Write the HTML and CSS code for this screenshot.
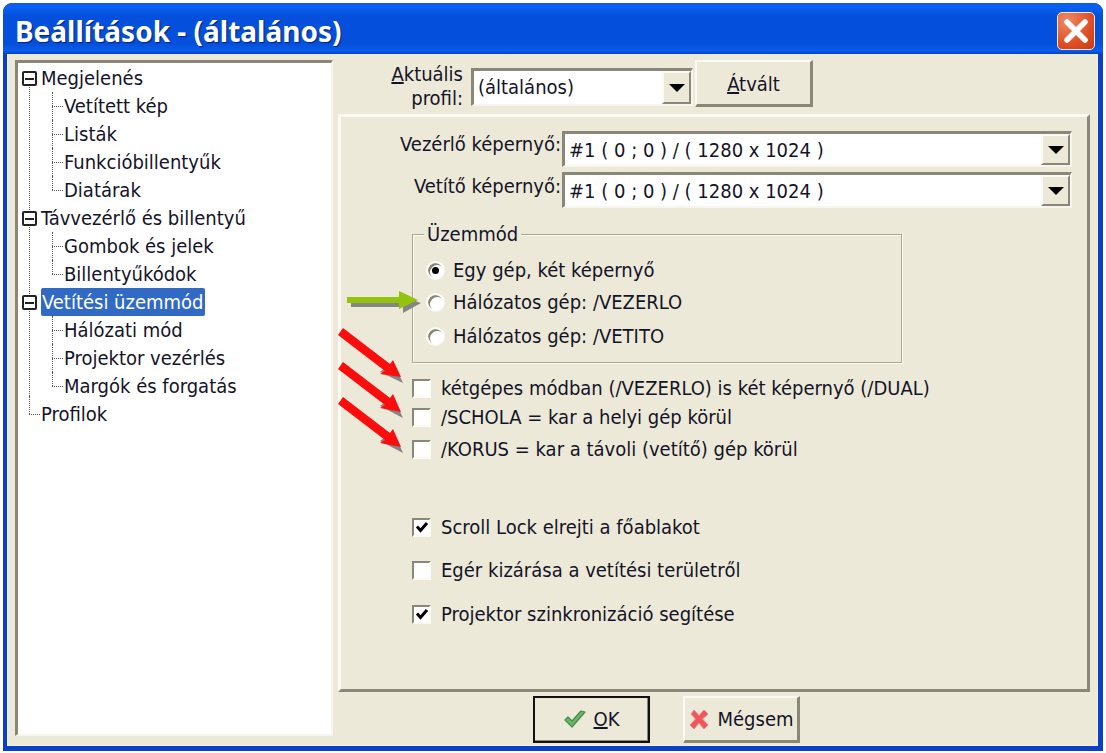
FILE: index.html
```html
<!DOCTYPE html>
<html lang="hu">
<head>
    <meta charset="UTF-8">
    <meta name="viewport" content="width=device-width, initial-scale=1.0">
    <title>Beállítások</title>
    <link rel="stylesheet" href="styles.css">
</head>
<body>
    <div class="window">
        <div class="titlebar">
            <span class="title">Beállítások - (általános)</span>
            <div class="close-btn">
                <svg width="28" height="28" viewBox="0 0 28 28"><path d="M5 5 L23 23 M23 5 L5 23" stroke="#fff" stroke-width="5.5" stroke-linecap="round" fill="none"/></svg>
            </div>
        </div>

        <div class="content">
            <div class="tree">
                <div class="node">
                    <div class="row"><span class="exp"></span><span class="label">Megjelenés</span></div>
                    <ul class="children">
                        <li>Vetített kép</li>
                        <li>Listák</li>
                        <li>Funkcióbillentyűk</li>
                        <li>Diatárak</li>
                    </ul>
                </div>
                <div class="node">
                    <div class="row"><span class="exp"></span><span class="label">Távvezérlő és billentyű</span></div>
                    <ul class="children">
                        <li>Gombok és jelek</li>
                        <li>Billentyűkódok</li>
                    </ul>
                </div>
                <div class="node">
                    <div class="row"><span class="exp"></span><span class="label selected">Vetítési üzemmód</span></div>
                    <ul class="children">
                        <li>Hálózati mód</li>
                        <li>Projektor vezérlés</li>
                        <li>Margók és forgatás</li>
                    </ul>
                </div>
                <div class="node leaf">
                    <div class="row"><span class="label">Profilok</span></div>
                </div>
            </div>

            <div class="main">
                <div class="profile-row">
                    <div class="profile-label"><u>A</u>ktuális<br>profil:</div>
                    <div class="combo profile-combo">
                        <span class="combo-text">(általános)</span>
                        <span class="combo-btn"><i class="caret"></i></span>
                    </div>
                    <div class="btn switch-btn"><span><u>Á</u>tvált</span></div>
                </div>

                <div class="panel">
                    <div class="screen-row">
                        <span class="screen-label">Vezérlő képernyő:</span>
                        <div class="combo screen-combo">
                            <span class="combo-text">#1 ( 0 ; 0 ) / ( 1280 x 1024 )</span>
                            <span class="combo-btn"><i class="caret"></i></span>
                        </div>
                    </div>
                    <div class="screen-row">
                        <span class="screen-label">Vetítő képernyő:</span>
                        <div class="combo screen-combo">
                            <span class="combo-text">#1 ( 0 ; 0 ) / ( 1280 x 1024 )</span>
                            <span class="combo-btn"><i class="caret"></i></span>
                        </div>
                    </div>

                    <div class="group">
                        <span class="legend">Üzemmód</span>
                        <div class="radio-row first"><span class="radio on"></span>Egy gép, két képernyő</div>
                        <div class="radio-row second"><span class="radio"></span>Hálózatos gép: /VEZERLO</div>
                        <div class="radio-row third"><span class="radio"></span>Hálózatos gép: /VETITO</div>
                    </div>

                    <div class="check-row r1"><span class="check"></span>kétgépes módban (/VEZERLO) is két képernyő (/DUAL)</div>
                    <div class="check-row r2"><span class="check"></span>/SCHOLA = kar a helyi gép körül</div>
                    <div class="check-row r3"><span class="check"></span>/KORUS = kar a távoli (vetítő) gép körül</div>

                    <div class="check-row r4"><span class="check"><svg width="14" height="14" viewBox="0 0 14 14"><path d="M2 6.5 L5.5 10.5 L12 3" stroke="#000" stroke-width="3" fill="none"/></svg></span>Scroll Lock elrejti a főablakot</div>
                    <div class="check-row r5"><span class="check"></span>Egér kizárása a vetítési területről</div>
                    <div class="check-row r6"><span class="check"><svg width="14" height="14" viewBox="0 0 14 14"><path d="M2 6.5 L5.5 10.5 L12 3" stroke="#000" stroke-width="3" fill="none"/></svg></span>Projektor szinkronizáció segítése</div>
                </div>

                <div class="footer">
                    <div class="btn ok-btn">
                        <svg width="24" height="22" viewBox="0 0 24 22"><path d="M2 12 L9 19 L22 4 L18 3 L9 13 L5 9 Z" fill="#6fb46a" stroke="#3f8f4a" stroke-width="1.2" stroke-linejoin="round"/></svg>
                        <span><u>O</u>K</span>
                    </div>
                    <div class="btn cancel-btn">
                        <svg width="22" height="22" viewBox="0 0 22 22"><path d="M3 6 L6 2 L11 7.5 L16 2 L20 6 L14.5 11 L20 17 L16 21 L11 15 L6 21 L2 17 L7.5 11 Z" fill="#f0575c" stroke="#e58a8a" stroke-width="1" stroke-linejoin="round"/></svg>
                        <span>Mégsem</span>
                    </div>
                </div>
            </div>
        </div>
    </div>

    <svg class="arrows" width="1106" height="753" viewBox="0 0 1106 753">
        <!-- shadows first, then the arrows -->
        <g fill="#858585">
            <path d="M351 303 H399 V295 L421 303 L403 313 V307 H351 Z"/>
            <path d="M380 372 L393 362 L403 383 Z"/>
            <path d="M380 406 L393 396 L403 418 Z"/>
            <path d="M380 441 L393 431 L403 453 Z"/>
        </g>
        <path d="M347 297 H399 V291 L418 300 L399 309 V303 H347 Z" fill="#92c30d"/>
        <g fill="#fb0d0d">
            <path d="M338 335 L343 328 L390 364 L393 360 L401 377 L380 374 L385 371 Z"/>
            <path d="M338 369 L343 362 L390 398 L393 394 L401 412 L380 408 L385 405 Z"/>
            <path d="M338 404 L343 397 L390 433 L393 429 L401 447 L380 443 L385 440 Z"/>
        </g>
    </svg>
</body>
</html>
```

FILE: styles.css
```css
* {
    box-sizing: border-box;
}
body {
    margin: 0;
    background: #fff;
    font-family: "DejaVu Sans", sans-serif;
    font-stretch: condensed;
    font-size: 20px;
    color: #141428;
    overflow: hidden;
}
.window {
    position: relative;
    width: 1100px;
    height: 748px;
    margin: 3px 0 0 3px;
    display: flex;
    flex-direction: column;
    background: #0a3fc8;
    border-radius: 9px 9px 0 0;
    padding: 0 5px 5px 4px;
}
.titlebar {
    height: 51px;
    margin: 0 -5px 0 -4px;
    padding: 5px 8px 0 12px;
    display: flex;
    align-items: center;
    justify-content: space-between;
    border-radius: 9px 9px 0 0;
    background: linear-gradient(to bottom, #0a5ae8 0, #0a62f2 8%, #0450dc 25%, #0450dc 80%, #0a5cec 93%, #0342c4 100%);
}
.title {
    color: #fff;
    font-family: "Noto Sans", sans-serif;
    font-size: 28px;
    font-weight: bold;
    font-stretch: normal;
    text-shadow: 1px 1px 1px #0a1f70;
}
.close-btn {
    width: 38px;
    height: 38px;
    display: flex;
    align-items: center;
    justify-content: center;
    border: 1.5px solid #f4e8e0;
    border-radius: 5px;
    background: radial-gradient(circle at 25% 20%, #ee8a64, #df4f26 60%, #c93a12);
}
.content {
    flex: 1;
    display: flex;
    gap: 5px;
    padding: 6px 8px 5px 7px;
    background: #ece9d8;
    border-left: 1px solid #f7f2d8;
    border-right: 1px solid #f7f2d8;
    border-bottom: 1px solid #f7f2d8;
    min-height: 0;
}

/* tree */
.tree {
    width: 318px;
    height: 676px;
    background: #fff;
    border-top: 3px solid #8a8778;
    border-left: 3px solid #8a8778;
    border-right: 2px solid #f7f6ee;
    border-bottom: 2px solid #f7f6ee;
    padding-top: 1px;
    flex: none;
}
.node {
    position: relative;
}
.node::before {
    content: "";
    position: absolute;
    left: 11px;
    top: 14px;
    bottom: -14px;
    border-left: 1px dotted #555;
}
.node.leaf::before {
    top: -4px;
    bottom: auto;
    height: 18px;
}
.node.leaf::after {
    content: "";
    position: absolute;
    left: 11px;
    top: 14px;
    width: 11px;
    border-top: 1px dotted #555;
}
.row {
    height: 28px;
    display: flex;
    align-items: center;
    padding-left: 22px;
    position: relative;
}
.exp {
    position: absolute;
    left: 4px;
    top: 7px;
    width: 15px;
    height: 15px;
    border: 2px solid #222;
    border-radius: 2px;
    background: linear-gradient(#222, #222) center / 9px 2px no-repeat #fff;
    z-index: 1;
}
.label {
    padding: 0 1px;
    white-space: nowrap;
}
.selected {
    background: #316ac5;
    color: #fff;
    border-radius: 2px;
    height: 28px;
    line-height: 29px;
    padding: 0 1px;
    margin-left: 1px;
}
.children {
    list-style: none;
    margin: 0;
    padding: 0 0 0 46px;
}
.children li {
    position: relative;
    height: 28px;
    line-height: 29px;
    white-space: nowrap;
}
.children li::before {
    content: "";
    position: absolute;
    left: -12px;
    top: 0;
    bottom: 0;
    border-left: 1px dotted #555;
}
.children li:last-child::before {
    bottom: 14px;
}
.children li::after {
    content: "";
    position: absolute;
    left: -12px;
    top: 14px;
    width: 11px;
    border-top: 1px dotted #555;
}

/* right side */
.main {
    flex: 1;
    min-width: 0;
    display: flex;
    flex-direction: column;
}
.profile-row {
    height: 54px;
    flex: none;
    display: flex;
    align-items: flex-start;
}
.profile-label {
    width: 125px;
    text-align: right;
    line-height: 24px;
    margin-top: 2px;
}
.combo {
    display: flex;
    background: #fff;
    border-top: 3px solid #8a8778;
    border-left: 3px solid #8a8778;
    border-right: 2px solid #f7f6ee;
    border-bottom: 2px solid #f7f6ee;
}
.combo-text {
    flex: 1;
    padding-left: 4px;
    white-space: nowrap;
}
.combo-btn {
    width: 29px;
    display: flex;
    align-items: center;
    justify-content: center;
    background: #ece9d8;
    border-top: 2px solid #fbfaf4;
    border-left: 2px solid #fbfaf4;
    border-right: 2px solid #8a8778;
    border-bottom: 2px solid #8a8778;
}
.caret {
    width: 0;
    height: 0;
    border-left: 8px solid transparent;
    border-right: 8px solid transparent;
    border-top: 8px solid #000;
}
.profile-combo {
    width: 222px;
    height: 38px;
    margin: 8px 0 0 8px;
    line-height: 32px;
}
.btn {
    display: flex;
    align-items: center;
    justify-content: center;
    gap: 7px;
    background: #ece9d8;
    border-top: 2px solid #fbfaf4;
    border-left: 2px solid #fbfaf4;
    border-right: 3px solid #8a8778;
    border-bottom: 3px solid #8a8778;
}
.switch-btn {
    width: 118px;
    height: 47px;
    margin-left: 2px;
}
.switch-btn span {
    padding-top: 2px;
}
.panel {
    height: 578px;
    width: 752px;
    flex: none;
    padding: 14px 0 0 0;
    background: #ece9d8;
    border-top: 3px solid #fbfaf4;
    border-left: 3px solid #fbfaf4;
    border-right: 3px solid #8a8778;
    border-bottom: 3px solid #8a8778;
}
.screen-row {
    display: flex;
    gap: 1px;
    margin-bottom: 5px;
}
.screen-label {
    width: 220px;
    text-align: right;
    white-space: nowrap;
    line-height: 27px;
}
.screen-row + .screen-row .screen-label {
    line-height: 29px;
}
.screen-combo {
    width: 510px;
    height: 36px;
    line-height: 32px;
}
.group {
    position: relative;
    width: 490px;
    height: 129px;
    margin: 26px 0 0 71px;
    padding-top: 22px;
    border: 1px solid #aaa795;
    box-shadow: 1px 1px 0 #fbfaf4, inset 1px 1px 0 #fbfaf4;
}
.legend {
    position: absolute;
    left: 11px;
    top: -13px;
    background: #ece9d8;
    padding: 0 3px;
    line-height: 24px;
}
.radio-row {
    display: flex;
    align-items: center;
    gap: 8px;
    height: 26px;
    padding-left: 13px;
}
.radio-row.second {
    margin-top: 6px;
}
.radio-row.third {
    margin-top: 8px;
}
.radio {
    width: 19px;
    height: 19px;
    border-radius: 50%;
    background: #fff;
    border: 2px solid #fbfaf4;
    box-shadow: inset 2px 2px 0 #8a8778;
    flex: none;
    position: relative;
}
.radio.on::after {
    content: "";
    position: absolute;
    left: 4px;
    top: 4px;
    width: 7px;
    height: 7px;
    border-radius: 50%;
    background: #000;
}
.check-row {
    display: flex;
    align-items: center;
    gap: 10px;
    height: 26px;
    margin-left: 71px;
    white-space: nowrap;
}
.check {
    width: 19px;
    height: 19px;
    flex: none;
    display: flex;
    align-items: center;
    justify-content: center;
    background: #fff;
    border-top: 2px solid #8a8778;
    border-left: 2px solid #8a8778;
    border-right: 2px solid #fbfaf4;
    border-bottom: 2px solid #fbfaf4;
}
.check-row.r1 {
    margin-top: 12px;
}
.check-row.r2 {
    margin-top: 3px;
}
.check-row.r3 {
    margin-top: 6px;
}
.check-row.r4 {
    margin-top: 52px;
}
.check-row.r5 {
    margin-top: 17px;
}
.check-row.r6 {
    margin-top: 18px;
}
.footer {
    height: 48px;
    flex: none;
    display: flex;
    gap: 33px;
    padding: 4px 0 0 195px;
}
.ok-btn,
.cancel-btn {
    width: 117px;
    height: 47px;
}
.ok-btn {
    outline: 2px solid #111;
    outline-offset: -2px;
}

.arrows {
    position: absolute;
    left: 0;
    top: 0;
    pointer-events: none;
}
```
